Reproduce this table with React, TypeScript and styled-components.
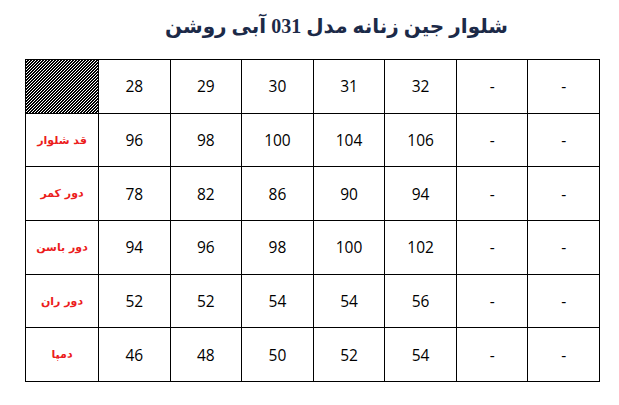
import React from 'react';
import styled, { createGlobalStyle } from 'styled-components';

const GlobalStyle = createGlobalStyle`
  html, body {
    margin: 0;
    padding: 0;
    background: #ffffff;
  }
`;

const Page = styled.div`
  width: 619px;
  height: 405px;
  background: #fff;
  display: flex;
  flex-direction: column;
  padding: 14px 0 0 25px;
  box-sizing: border-box;
`;

const Title = styled.h1`
  margin: 0;
  width: 575px;
  padding-left: 48px;
  box-sizing: border-box;
  height: 45px;
  text-align: center;
  direction: rtl;
  font-family: 'Liberation Serif', 'DejaVu Sans', serif;
  font-weight: 700;
  font-size: 20px;
  line-height: 24px;
  color: #1c2a48;
`;

const Grid = styled.div`
  display: grid;
  grid-template-columns: 73px repeat(7, 1fr);
  grid-auto-rows: 53.7px;
  width: 575px;
  border-top: 1.5px solid #000;
  border-left: 1.5px solid #000;
  box-sizing: border-box;
`;

const Cell = styled.div<{ $hatched?: boolean }>`
  display: flex;
  align-items: center;
  justify-content: center;
  border-right: 1.5px solid #000;
  border-bottom: 1.5px solid #000;
  font-family: 'Open Sans', 'Liberation Sans', sans-serif;
  font-size: 15.5px;
  color: #000;
  background-color: #fff;
  background-image: ${(p) =>
    p.$hatched
      ? 'linear-gradient(-45deg, #000 25%, #fff 25%, #fff 50%, #000 50%, #000 75%, #fff 75%)'
      : 'none'};
  background-size: 3px 3px;
`;

const Label = styled(Cell)`
  direction: rtl;
  font-family: 'DejaVu Sans', sans-serif;
  font-weight: 700;
  font-size: 11px;
  color: #ec1c1c;
`;

const sizes = ['28', '29', '30', '31', '32', '-', '-'];

const rows: { label: string; values: string[] }[] = [
  { label: 'قد شلوار', values: ['96', '98', '100', '104', '106', '-', '-'] },
  { label: 'دور کمر', values: ['78', '82', '86', '90', '94', '-', '-'] },
  { label: 'دور باسن', values: ['94', '96', '98', '100', '102', '-', '-'] },
  { label: 'دور ران', values: ['52', '52', '54', '54', '56', '-', '-'] },
  { label: 'دمپا', values: ['46', '48', '50', '52', '54', '-', '-'] },
];

const App: React.FC = () => {
  return (
    <>
      <GlobalStyle />
      <Page>
        <Title>شلوار جین زنانه مدل 031 آبی روشن</Title>
        <Grid>
          <Cell $hatched />
          {sizes.map((s, i) => (
            <Cell key={`h${i}`}>{s}</Cell>
          ))}
          {rows.map((row) => (
            <React.Fragment key={row.label}>
              <Label>{row.label}</Label>
              {row.values.map((v, i) => (
                <Cell key={i}>{v}</Cell>
              ))}
            </React.Fragment>
          ))}
        </Grid>
      </Page>
    </>
  );
};

export default App;
